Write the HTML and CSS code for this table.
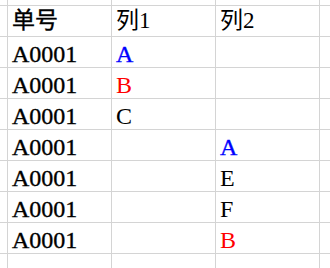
FILE: index.html
```html
<!DOCTYPE html>
<html lang="zh">
<head>
<meta charset="utf-8">
<link rel="stylesheet" href="styles.css">
</head>
<body>
<div class="sheet">
  <div class="c"></div><div class="c"></div><div class="c"></div><div class="c"></div><div class="c"></div>

  <div class="c"></div><div class="c cjk hb">单号</div><div class="c cjk">列1</div><div class="c cjk">列2</div><div class="c"></div>

  <div class="c"></div><div class="c b">A0001</div><div class="c b blue">A</div><div class="c"></div><div class="c"></div>
  <div class="c"></div><div class="c b">A0001</div><div class="c red">B</div><div class="c"></div><div class="c"></div>
  <div class="c"></div><div class="c b">A0001</div><div class="c">C</div><div class="c"></div><div class="c"></div>
  <div class="c"></div><div class="c b">A0001</div><div class="c"></div><div class="c b blue">A</div><div class="c"></div>
  <div class="c"></div><div class="c b">A0001</div><div class="c"></div><div class="c">E</div><div class="c"></div>
  <div class="c"></div><div class="c b">A0001</div><div class="c"></div><div class="c">F</div><div class="c"></div>
  <div class="c"></div><div class="c b">A0001</div><div class="c"></div><div class="c red">B</div><div class="c"></div>

  <div class="c"></div><div class="c"></div><div class="c"></div><div class="c"></div><div class="c"></div>
</div>
</body>
</html>
```
FILE: styles.css
```css
html, body {
  margin: 0;
  padding: 0;
  background: #ffffff;
}
.sheet {
  width: 330px;
  height: 268px;
  display: grid;
  grid-template-columns: 7px 103px 103px 103px 1fr;
  grid-template-rows: 5px repeat(8, 30px) 1fr;
  gap: 1px;
  background: #d4d4d4;
  overflow: hidden;
  font-family: "Liberation Serif", "Noto Sans CJK SC", serif;
  font-size: 24px;
  color: #000000;
}
.c {
  background: #ffffff;
  display: flex;
  align-items: flex-end;
  padding: 0 0 1px 4px;
  line-height: 24px;
  white-space: nowrap;
  overflow: hidden;
}
.cjk {
  font-family: "Liberation Serif", "Noto Sans CJK SC", sans-serif;
  font-size: 23px;
  padding-bottom: 3px;
}
.hb {
  font-weight: 400;
  -webkit-text-stroke: 0.4px currentColor;
}
.b {
  font-weight: 400;
  -webkit-text-stroke: 0.35px currentColor;
}
.blue {
  color: #0000ff;
}
.red {
  color: #ff0000;
}
```
